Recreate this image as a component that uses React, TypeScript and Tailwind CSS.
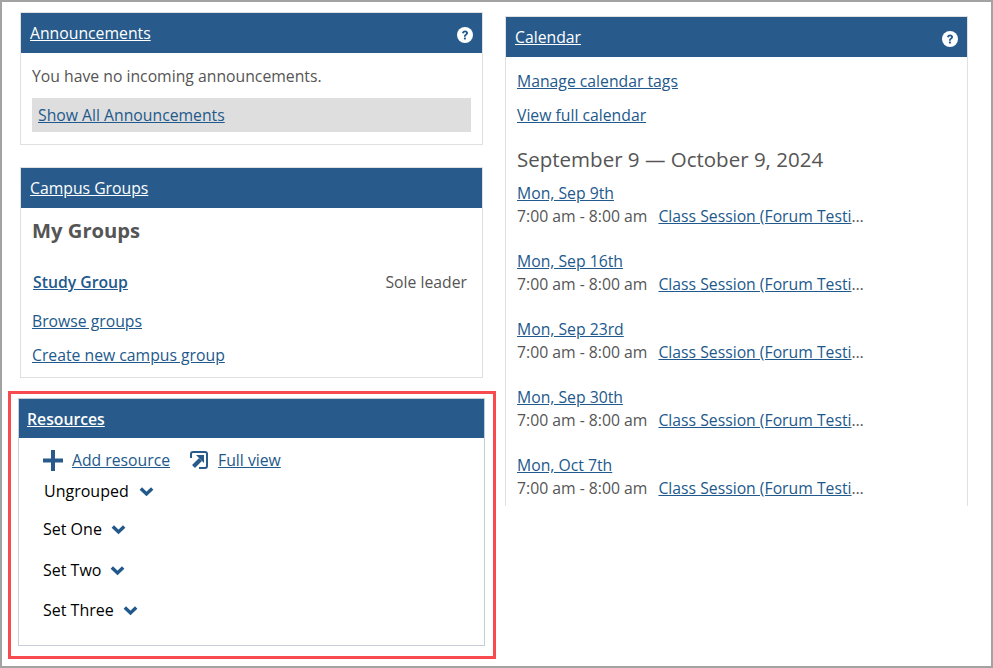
import React from "react";

const font = "font-['Open_Sans',sans-serif]";
const linkClass = "text-[#22598c] underline";

function HelpIcon() {
  return (
    <svg className="mt-[3px]" width="16" height="16" viewBox="0 0 16 16" aria-hidden="true">
      <circle cx="8" cy="8" r="8" fill="#fff" />
      <path
        d="M5 6.100C5.200 4.500 6.400 3.500 8 3.500c1.800 0 3 1 3 2.600 0 1.100-.6 1.700-1.400 2.200-.6.400-.8.600-.8 1.100v.3H7v-.5c0-.9.400-1.500 1.100-1.900.5-.3.900-.6.900-1.100 0-.5-.4-.9-1-.9-.6 0-1 .4-1.100 1.100L5 6.100Z"
        fill="#22598c"
      />
      <rect x="6.900" y="10.500" width="2" height="2" rx=".4" fill="#22598c" />
    </svg>
  );
}

function Chevron() {
  return (
    <svg className="mt-[1px]" width="15" height="11" viewBox="0 0 15 11" aria-hidden="true">
      <path d="M1.800 2.500 7.500 8 13.200 2.500" fill="none" stroke="#22598c" strokeWidth="3.400" />
    </svg>
  );
}

function PanelHeader({ title, help, bold }: { title: string; help?: boolean; bold?: boolean }) {
  return (
    <div className={`flex items-center justify-between bg-[#285b8b] pr-[9px] ${bold ? "h-[39px] pl-[8px]" : "h-[40px] pl-[9px]"}`}>
      <a className={`text-white underline ${bold ? "font-semibold" : ""}`}>{title}</a>
      {help && <HelpIcon />}
    </div>
  );
}

const events = ["Mon, Sep 9th", "Mon, Sep 16th", "Mon, Sep 23rd", "Mon, Sep 30th", "Mon, Oct 7th"];

export default function App() {
  return (
    <div className={`${font} flex h-[668px] w-[993px] border-2 border-[#a3a3a3] bg-white text-[15.750px] leading-[22px] text-[#555]`}>
      <div className="ml-[18px] mt-[10px] w-[463px]">
        <section className="h-[133px] border border-[#e0e0e0]">
          <PanelHeader title="Announcements" help />
          <div className="px-[11px] pt-[12px]">
            <p>You have no incoming announcements.</p>
            <div className="mt-[11px] flex h-[34px] items-center bg-[#dedede] px-[6px]">
              <a className={linkClass}>Show All Announcements</a>
            </div>
          </div>
        </section>

        <section className="mt-[22px] h-[211px] border border-[#e0e0e0]">
          <PanelHeader title="Campus Groups" />
          <div className="px-[11px] pt-[11px]">
            <h2 className="text-[20.200px] font-bold leading-[22px]">My Groups</h2>
            <div className="mt-[30px] flex items-center justify-between pl-px pr-[4px]">
              <a className={`${linkClass} font-semibold`}>Study Group</a>
              <span>Sole leader</span>
            </div>
            <div className="mt-[17px]">
              <a className={linkClass}>Browse groups</a>
            </div>
            <div className="mt-[12px]">
              <a className={linkClass}>Create new campus group</a>
            </div>
          </div>
        </section>

        <div className="-ml-[12px] -mr-[13px] mt-[13px] h-[268px] border-[3px] border-[#f84a4f] pl-[7px] pr-[8px] pt-[4px]">
          <section className="h-[248px] border border-[#c5ced6]">
            <PanelHeader title="Resources" bold />
            <div className="pl-[24px] text-black">
              <div className="mt-[11px] flex items-center text-[#22598c]">
                <svg width="20" height="21" viewBox="0 0 20 21" aria-hidden="true">
                  <path d="M10 0v21M0 10.500h20" stroke="#285b8b" strokeWidth="4" />
                </svg>
                <a className={`${linkClass} ml-[9px]`}>Add resource</a>
                <svg className="ml-[20px]" width="18" height="18" viewBox="0 0 18 18" aria-hidden="true">
                  <path d="M1 7V3a2 2 0 0 1 2-2h12a2 2 0 0 1 2 2v12a2 2 0 0 1-2 2H9" fill="none" stroke="#285b8b" strokeWidth="2" />
                  <path d="M3.500 15.500 10.500 8.500" stroke="#285b8b" strokeWidth="4" />
                  <path d="M6 4h8v8Z" fill="#285b8b" />
                </svg>
                <a className={`${linkClass} ml-[10px]`}>Full view</a>
              </div>
              <div className="ml-[1px] mt-[9px] flex h-[22px] items-center gap-[10px] text-[16px]">
                <span>Ungrouped</span>
                <Chevron />
              </div>
              <div className="mt-[16px] flex h-[22px] items-center gap-[9px] text-[16px]">
                <span>Set One</span>
                <Chevron />
              </div>
              <div className="mt-[19px] flex h-[22px] items-center gap-[9px] text-[16px]">
                <span>Set Two</span>
                <Chevron />
              </div>
              <div className="mt-[18px] flex h-[22px] items-center gap-[9px] text-[16px]">
                <span>Set Three</span>
                <Chevron />
              </div>
            </div>
          </section>
        </div>
      </div>

      <section className="ml-[22px] mt-[14px] h-[490px] w-[463px] border-x border-t border-[#e0e0e0]">
        <PanelHeader title="Calendar" help />
        <div className="px-[11px]">
          <div className="mt-[13px]">
            <a className={linkClass}>Manage calendar tags</a>
          </div>
          <div className="mt-[12px]">
            <a className={linkClass}>View full calendar</a>
          </div>
          <h2 className="mt-[20px] text-[20.500px] leading-[26px]">September 9 — October 9, 2024</h2>
          <div className="mt-[10px] flex flex-col gap-[23px]">
            {events.map((day) => (
              <div key={day}>
                <a className={linkClass}>{day}</a>
                <div className="mt-[1px] flex">
                  <span className="whitespace-pre">7:00 am - 8:00 am</span>
                  <div className="ml-[11px] w-[207px] truncate">
                    <a className={linkClass}>Class Session (Forum Testing Session)</a>
                  </div>
                </div>
              </div>
            ))}
          </div>
        </div>
      </section>
    </div>
  );
}
